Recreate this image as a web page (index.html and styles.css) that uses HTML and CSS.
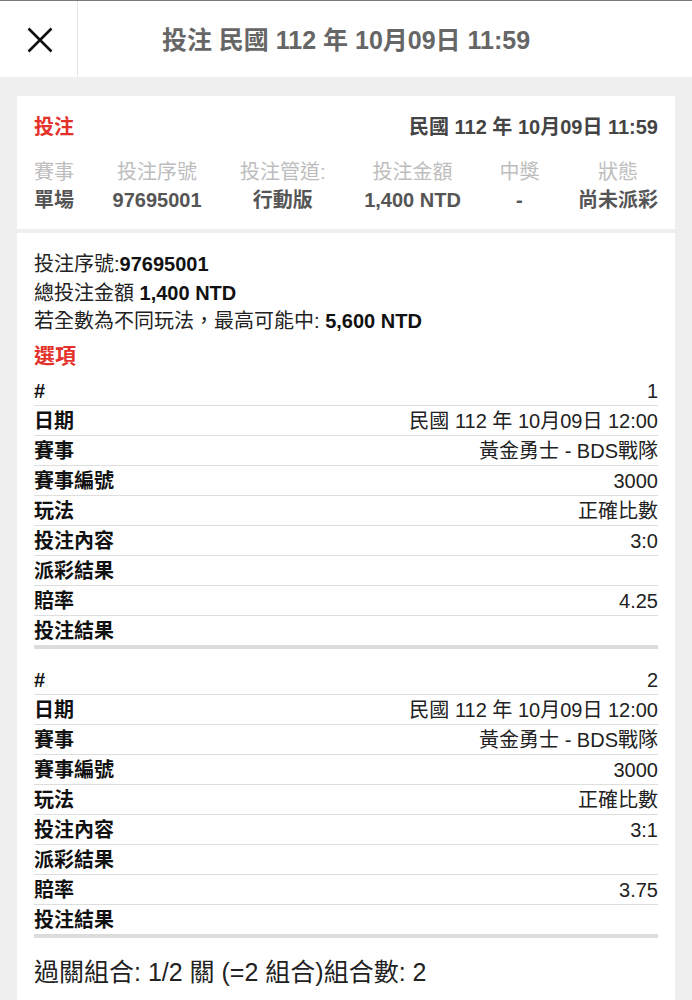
FILE: index.html
```html
<!DOCTYPE html>
<html lang="zh-Hant">
<head>
    <meta charset="UTF-8">
    <meta name="viewport" content="width=device-width, initial-scale=1.0">
    <title>投注</title>
    <link rel="stylesheet" href="styles.css">
</head>
<body>
    <div class="topbar">
        <div class="close-btn">
            <svg width="26" height="26" viewBox="0 0 26 26">
                <path d="M1.5 1.5 L24.5 24.5 M24.5 1.5 L1.5 24.5" stroke="#111" stroke-width="2.6" fill="none"/>
            </svg>
        </div>
        <div class="topbar-title">投注 民國 112 年 10月09日 11:59</div>
    </div>

    <div class="content">
        <div class="card summary">
            <div class="summary-head">
                <span class="red-label">投注</span>
                <span class="summary-date">民國 112 年 10月09日 11:59</span>
            </div>
            <div class="stats">
                <div class="stat"><div class="stat-label">賽事</div><div class="stat-value">單場</div></div>
                <div class="stat"><div class="stat-label">投注序號</div><div class="stat-value">97695001</div></div>
                <div class="stat"><div class="stat-label">投注管道:</div><div class="stat-value">行動版</div></div>
                <div class="stat"><div class="stat-label">投注金額</div><div class="stat-value">1,400 NTD</div></div>
                <div class="stat"><div class="stat-label">中獎</div><div class="stat-value">-</div></div>
                <div class="stat"><div class="stat-label">狀態</div><div class="stat-value">尚未派彩</div></div>
            </div>
        </div>

        <div class="card detail">
            <div class="info-line">投注序號:<b>97695001</b></div>
            <div class="info-line">總投注金額 <b>1,400 NTD</b></div>
            <div class="info-line">若全數為不同玩法，最高可能中: <b>5,600 NTD</b></div>
            <div class="section-title">選項</div>

            <div class="selection">
                <div class="sel-row"><span class="sel-key">#</span><span>1</span></div>
                <div class="sel-row"><span class="sel-key">日期</span><span>民國 112 年 10月09日 12:00</span></div>
                <div class="sel-row"><span class="sel-key">賽事</span><span>黃金勇士 - BDS戰隊</span></div>
                <div class="sel-row"><span class="sel-key">賽事編號</span><span>3000</span></div>
                <div class="sel-row"><span class="sel-key">玩法</span><span>正確比數</span></div>
                <div class="sel-row"><span class="sel-key">投注內容</span><span>3:0</span></div>
                <div class="sel-row"><span class="sel-key">派彩結果</span><span></span></div>
                <div class="sel-row"><span class="sel-key">賠率</span><span>4.25</span></div>
                <div class="sel-row"><span class="sel-key">投注結果</span><span></span></div>
            </div>

            <div class="selection">
                <div class="sel-row"><span class="sel-key">#</span><span>2</span></div>
                <div class="sel-row"><span class="sel-key">日期</span><span>民國 112 年 10月09日 12:00</span></div>
                <div class="sel-row"><span class="sel-key">賽事</span><span>黃金勇士 - BDS戰隊</span></div>
                <div class="sel-row"><span class="sel-key">賽事編號</span><span>3000</span></div>
                <div class="sel-row"><span class="sel-key">玩法</span><span>正確比數</span></div>
                <div class="sel-row"><span class="sel-key">投注內容</span><span>3:1</span></div>
                <div class="sel-row"><span class="sel-key">派彩結果</span><span></span></div>
                <div class="sel-row"><span class="sel-key">賠率</span><span>3.75</span></div>
                <div class="sel-row"><span class="sel-key">投注結果</span><span></span></div>
            </div>

            <div class="combo">過關組合: 1/2 關 (=2 組合)組合數: 2</div>
        </div>
    </div>
</body>
</html>
```

FILE: styles.css
```css
/* Reset */
* {
    margin: 0;
    padding: 0;
    box-sizing: border-box;
}

body {
    font-family: "Liberation Sans", "Noto Sans CJK TC", sans-serif;
    background-color: #efefef;
    color: #222;
    font-size: 20px;
}

/* Barra superior */
.topbar {
    display: flex;
    height: 77px;
    background-color: #fff;
    border-top: 1px solid #7a7a7a;
}

.close-btn {
    width: 78px;
    border-right: 1px solid #e6e6e6;
    padding: 26px 0 0 27px;
}

.topbar-title {
    flex: 1;
    padding-right: 78px;
    text-align: center;
    font-size: 25px;
    font-weight: bold;
    color: #666;
    line-height: 78px;
}

.content {
    padding: 19px 17px 0;
}

.card {
    background-color: #fff;
    padding: 0 17px;
}

/* Resumo */
.summary {
    height: 133px;
    padding-top: 17px;
}

.summary-head {
    display: flex;
    justify-content: space-between;
    line-height: 28px;
}

.red-label {
    color: #e3312b;
    font-weight: bold;
}

.summary-date {
    font-weight: bold;
    color: #444;
}

.stats {
    display: flex;
    justify-content: space-between;
    margin-top: 17px;
}

.stat {
    text-align: center;
    line-height: 28px;
}

.stat-label {
    color: #bdbdbd;
}

.stat-value {
    color: #555;
    font-weight: bold;
}

/* Detalhes */
.detail {
    margin-top: 4px;
    padding-top: 17px;
    padding-bottom: 40px;
}

.info-line {
    line-height: 28.5px;
}

.info-line b {
    color: #111;
}

.section-title {
    color: #e3312b;
    font-size: 21px;
    font-weight: bold;
    line-height: 30px;
    margin-top: 5px;
    margin-bottom: 5px;
}

.selection {
    margin-bottom: 16px;
}

.sel-row {
    display: flex;
    justify-content: space-between;
    height: 30px;
    line-height: 30px;
    border-bottom: 1px solid #dedede;
    color: #222;
}

.sel-row:last-child {
    height: 33px;
    border-bottom: 4px solid #dcdcdc;
}

.sel-key {
    font-weight: bold;
    color: #111;
}

.combo {
    font-size: 25px;
    line-height: 36px;
    color: #222;
}
```
